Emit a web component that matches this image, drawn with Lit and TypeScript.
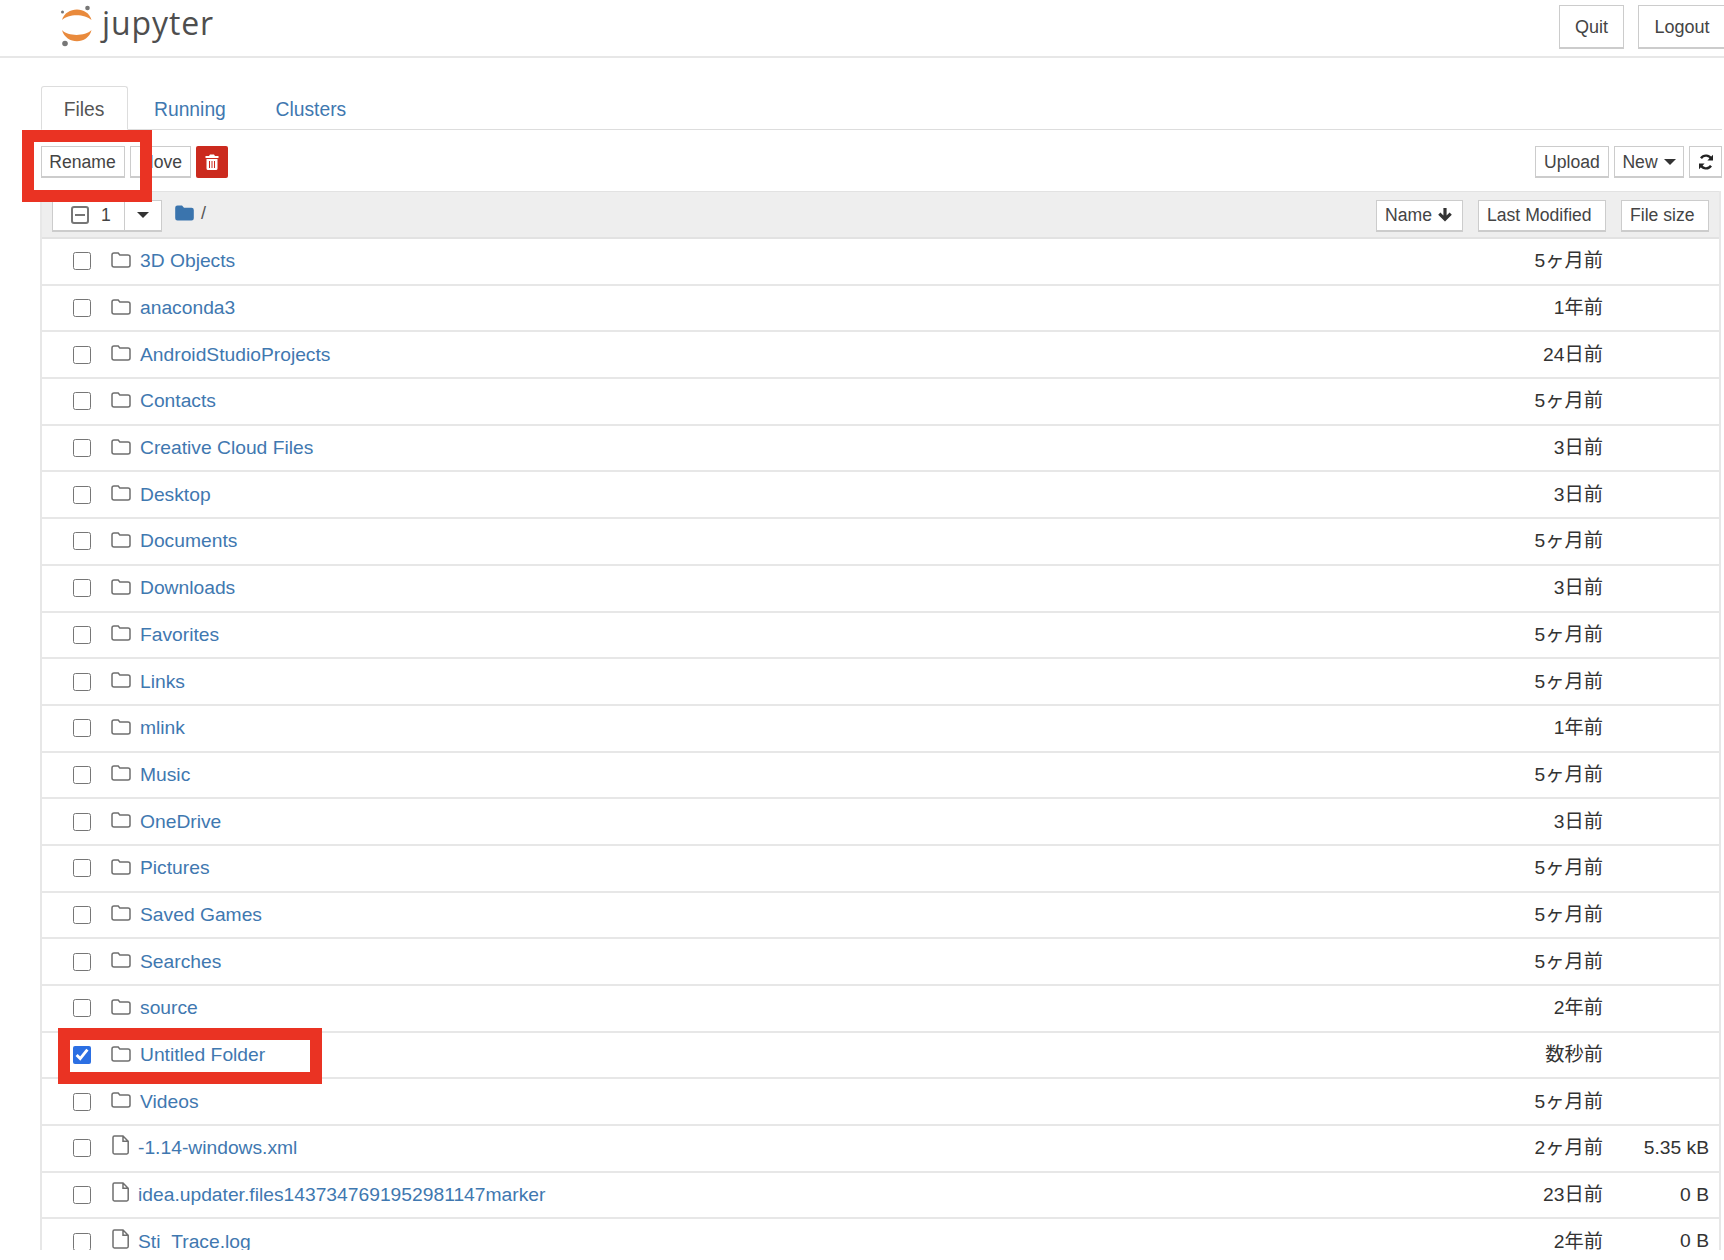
import { LitElement, html, css, svg } from "lit";
import { customElement } from "lit/decorators.js";

type Row = { n: string; d: string; s?: string; file?: boolean; checked?: boolean };

const rows: Row[] = [
  { n: "3D Objects", d: "5ヶ月前" },
  { n: "anaconda3", d: "1年前" },
  { n: "AndroidStudioProjects", d: "24日前" },
  { n: "Contacts", d: "5ヶ月前" },
  { n: "Creative Cloud Files", d: "3日前" },
  { n: "Desktop", d: "3日前" },
  { n: "Documents", d: "5ヶ月前" },
  { n: "Downloads", d: "3日前" },
  { n: "Favorites", d: "5ヶ月前" },
  { n: "Links", d: "5ヶ月前" },
  { n: "mlink", d: "1年前" },
  { n: "Music", d: "5ヶ月前" },
  { n: "OneDrive", d: "3日前" },
  { n: "Pictures", d: "5ヶ月前" },
  { n: "Saved Games", d: "5ヶ月前" },
  { n: "Searches", d: "5ヶ月前" },
  { n: "source", d: "2年前" },
  { n: "Untitled Folder", d: "数秒前", checked: true },
  { n: "Videos", d: "5ヶ月前" },
  { n: "-1.14-windows.xml", d: "2ヶ月前", s: "5.35 kB", file: true },
  { n: "idea.updater.files1437347691952981147marker", d: "23日前", s: "0 B", file: true },
  { n: "Sti_Trace.log", d: "2年前", s: "0 B", file: true },
];

const folderIcon = svg`<svg class="ico" width="20" height="16" viewBox="0 0 20 16"><path d="M3 1h4.2l1.6 2H17a2 2 0 0 1 2 2v8a2 2 0 0 1-2 2H3a2 2 0 0 1-2-2V3a2 2 0 0 1 2-2z" fill="none" stroke="#6f6f6f" stroke-width="1.5"/></svg>`;
const fileIcon = svg`<svg class="ico file" width="18" height="20" viewBox="0 0 18 20"><path d="M2.4 1H11l5.2 5.2V17.6a1.4 1.4 0 0 1-1.4 1.4H2.4A1.4 1.4 0 0 1 1 17.6V2.4A1.4 1.4 0 0 1 2.4 1zM11 1v5.2h5.2" fill="none" stroke="#6f6f6f" stroke-width="1.5"/></svg>`;

@customElement("app-root")
export class AppRoot extends LitElement {
  static styles = css`
    :host {
      display: block;
      position: relative;
      height: 1260px;
      overflow: hidden;
      background: #fff;
      font-family: "Liberation Sans", "Noto Sans CJK JP", sans-serif;
      color: #333;
    }
    .header {
      height: 56px;
      border-bottom: 2px solid #e7e7e7;
      display: flex;
      align-items: flex-start;
      padding-left: 58px;
    }
    .logo {
      display: flex;
      align-items: flex-start;
      gap: 8px;
    }
    .wordmark {
      font-family: "Open Sans", sans-serif;
      font-size: 32px;
      line-height: 47px;
      color: #4e4e4e;
      letter-spacing: 0.9px;
      font-weight: 500;
      margin-top: -1px;
    }
    .top-actions {
      margin-left: auto;
      display: flex;
      gap: 14px;
      margin-top: 5px;
      margin-right: -2px;
    }
    .btn {
      box-sizing: border-box;
      height: 32px;
      border: 1px solid #ccc;
      border-bottom-width: 2px;
      background: #fff;
      font-size: 17.6px;
      color: #444;
      display: flex;
      align-items: center;
      justify-content: center;
      white-space: nowrap;
    }
    .top-actions .btn {
      height: 44px;
      font-size: 18px;
      padding-top: 1px;
    }
    .quit { width: 65px; }
    .logout { width: 88px; }
    .main {
      padding: 28px 2px 0 41px;
    }
    .tabs {
      display: flex;
      height: 43px;
      border-bottom: 1px solid #ddd;
      font-size: 19.3px;
    }
    .tab {
      box-sizing: border-box;
      height: 44px;
      padding-top: 4px;
      display: flex;
      align-items: center;
      color: #3f78b0;
    }
    .tab.active {
      width: 87px;
      justify-content: center;
      padding-right: 1px;
      color: #555;
      background: #fff;
      border: 1px solid #ddd;
      border-bottom-color: #fff;
      border-radius: 3px 3px 0 0;
    }
    .tab.running { width: 147.5px; padding-left: 26px; }
    .tab.clusters { width: 108px; }
    .toolbar {
      display: flex;
      align-items: center;
      height: 61px;
      padding-top: 3px;
      box-sizing: border-box;
    }
    .toolbar .btn { padding-top: 1px; }
    .rename { width: 84px; margin-right: 5px; padding-right: 1px; }
    .move { width: 61px; margin-right: 5px; }
    .del {
      width: 32px;
      height: 32px;
      background: #cb2a1e;
      border-radius: 2px;
      display: flex;
      align-items: center;
      justify-content: center;
    }
    .right {
      margin-left: auto;
      display: flex;
      gap: 5px;
    }
    .upload { width: 74px; }
    .new { width: 70px; gap: 6px; }
    .refresh { width: 33px; }
    .caret {
      width: 0;
      height: 0;
      border-left: 6px solid transparent;
      border-right: 6px solid transparent;
      border-top: 6px solid #333;
    }
    .list {
      height: 1059px;
      overflow: hidden;
      border-left: 2px solid #e7e7e7;
      border-right: 2px solid #e7e7e7;
      margin-left: -1px;
      margin-right: 1px;
    }
    .list-head {
      box-sizing: border-box;
      height: 48px;
      margin-left: -1px;
      margin-right: -2px;
      background: #eee;
      border-top: 1px solid #e2e2e2;
      border-bottom: 2px solid #e2e2e2;
      display: flex;
      align-items: center;
      padding: 2px 12px 0 11px;
    }
    .select {
      box-sizing: border-box;
      display: flex;
      align-items: center;
      width: 110px;
      height: 32px;
      background: #fff;
      border: 1px solid #ccc;
      border-bottom-width: 2px;
      font-size: 17.6px;
      color: #444;
    }
    .select .left {
      flex: 0 0 72px;
      display: flex;
      align-items: center;
      padding-left: 18px;
      gap: 12px;
      box-sizing: border-box;
      border-right: 1px solid #ccc;
      height: 100%;
    }
    .select .carets {
      flex: 1;
      display: flex;
      justify-content: center;
    }
    .minus {
      box-sizing: border-box;
      width: 18px;
      height: 18px;
      border: 2px solid #767676;
      border-radius: 3px;
      display: flex;
      align-items: center;
      justify-content: center;
    }
    .minus::before {
      content: "";
      width: 10px;
      height: 2px;
      background: #767676;
    }
    .crumb {
      display: flex;
      align-items: center;
      gap: 7px;
      margin-left: 13px;
      font-size: 18px;
      color: #555;
      margin-top: -5px;
    }
    .sorts {
      margin-left: auto;
      display: flex;
      gap: 15px;
    }
    .name-sort { width: 87px; gap: 5px; justify-content: flex-start; padding-left: 8px; }
    .mod-sort { width: 128px; justify-content: flex-start; padding-left: 8px; }
    .size-sort { width: 88px; justify-content: flex-start; padding-left: 8px; }
    .row {
      box-sizing: border-box;
      height: 46.7px;
      border-bottom: 2px solid #e7e7e7;
      display: grid;
      grid-template-columns: 69px 27px 1fr 130px 105px;
      align-items: center;
      font-size: 19.25px;
      padding-right: 10px;
    }
    .check {
      margin: 0 0 0 31px;
      width: 18px;
      height: 18px;
      accent-color: #2b6fe3;
    }
    .ico { display: block; margin-bottom: 3px; }
    .ico.file { margin-bottom: 6px; margin-left: 1px; }
    .name {
      color: #3f78b0;
      white-space: nowrap;
      padding-left: 2px;
    }
    .row.is-file .name { padding-left: 0; }
    .date { text-align: right; padding-bottom: 4px; padding-right: 1px; }
    .size { text-align: right; padding-bottom: 1px; }
    .mark {
      position: absolute;
      box-sizing: border-box;
      border: 12px solid #ea3323;
    }
    .mark.a { left: 22px; top: 130px; width: 130px; height: 72px; }
    .mark.b { left: 58px; top: 1028px; width: 264px; height: 56px; }
  `;

  render() {
    return html`
      <div class="header">
        <div class="logo">
          <svg width="36" height="48" viewBox="0 0 36 48">
            <path d="M4 20C8 6 30 6 33.500 20C27 13.500 10 13.500 4 20z" fill="#e98a3c" />
            <path d="M4 30C10 36.500 27 36.500 33.500 30C30 45 8 45 4 30z" fill="#e98a3c" />
            <circle cx="29.500" cy="8" r="2.300" fill="#777" />
            <circle cx="4.500" cy="12" r="1.500" fill="#777" />
            <circle cx="7" cy="43.500" r="2.800" fill="#777" />
          </svg>
          <span class="wordmark">jupyter</span>
        </div>
        <div class="top-actions">
          <div class="btn quit">Quit</div>
          <div class="btn logout">Logout</div>
        </div>
      </div>
      <div class="main">
        <div class="tabs">
          <div class="tab active">Files</div>
          <div class="tab running">Running</div>
          <div class="tab clusters">Clusters</div>
        </div>
        <div class="toolbar">
          <div class="btn rename">Rename</div>
          <div class="btn move">Move</div>
          <div class="del">
            <svg width="14" height="16" viewBox="0 0 14 16">
              <path d="M5 0.5h4l1 1.500h3.500v2H.5V2H4zM1.500 5h11v9.500a1.500 1.500 0 0 1-1.500 1.500H3a1.500 1.500 0 0 1-1.500-1.500z" fill="#fff" />
              <path d="M4.500 7v7M7 7v7M9.500 7v7" stroke="#cb2a1e" stroke-width="1" />
            </svg>
          </div>
          <div class="right">
            <div class="btn upload">Upload</div>
            <div class="btn new">New <span class="caret"></span></div>
            <div class="btn refresh">
              <svg width="16" height="16" viewBox="0 0 16 16">
                <path d="M13.600 5.600A6 6 0 0 0 3 4.200M2.400 10.400A6 6 0 0 0 13 11.800" fill="none" stroke="#222" stroke-width="2.400" />
                <path d="M15 .8V6.400H9.400zM1 15.200V9.600H6.600z" fill="#222" />
              </svg>
            </div>
          </div>
        </div>
        <div class="list">
          <div class="list-head">
            <div class="select">
              <div class="left"><span class="minus"></span><span>1</span></div>
              <div class="carets"><span class="caret"></span></div>
            </div>
            <div class="crumb">
              <svg width="19" height="16" viewBox="0 0 19 16">
                <path d="M2.500 0.5h4.500l2 2.300h7.500a2.300 2.300 0 0 1 2.300 2.300v8.200a2.300 2.300 0 0 1-2.300 2.300H2.500A2.300 2.300 0 0 1 .2 13.300V2.800A2.300 2.300 0 0 1 2.500 .5z" fill="#3a74ad" />
              </svg>
              <span>/</span>
            </div>
            <div class="sorts">
              <div class="btn name-sort">Name
                <svg width="16" height="16" viewBox="0 0 16 16">
                  <path d="M6.400 1h3.200v7.500l3-3 2.200 2.200L8 14.600 1.200 7.700l2.200-2.200 3 3z" fill="#333" />
                </svg>
              </div>
              <div class="btn mod-sort">Last Modified</div>
              <div class="btn size-sort">File size</div>
            </div>
          </div>
          ${rows.map(
            (r) => html`
              <div class="row ${r.file ? "is-file" : ""}">
                <input class="check" type="checkbox" .checked=${!!r.checked} />
                ${r.file ? fileIcon : folderIcon}
                <span class="name">${r.n}</span>
                <span class="date">${r.d}</span>
                <span class="size">${r.s ?? ""}</span>
              </div>
            `
          )}
        </div>
      </div>
      <div class="mark a"></div>
      <div class="mark b"></div>
    `;
  }
}
